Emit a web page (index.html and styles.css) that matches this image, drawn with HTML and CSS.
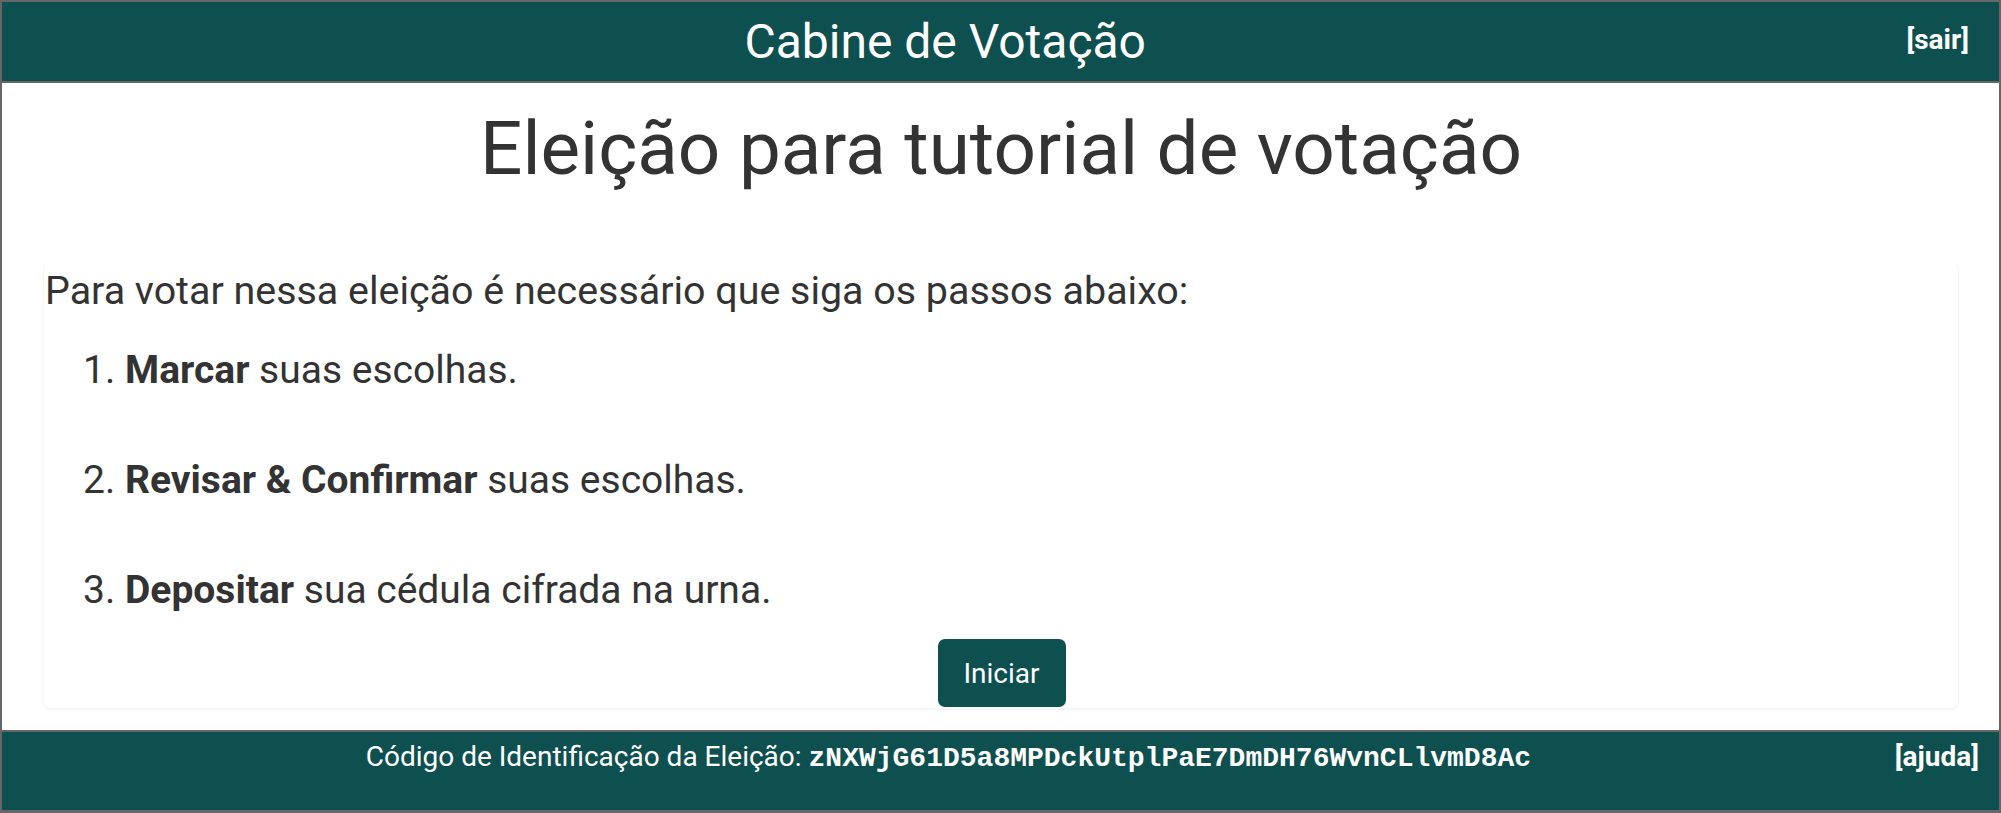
FILE: index.html
```html
<!DOCTYPE html>
<html lang="pt-BR">
<head>
<meta charset="utf-8">
<title>Cabine de Votação</title>
<link rel="stylesheet" href="styles.css">
</head>
<body>
<div class="frame">
  <header class="topbar">
    <div class="topbar-title">Cabine de Votação</div>
    <a class="topbar-link" href="#">[sair]</a>
  </header>
  <main class="content">
    <h1 class="election-title">Eleição para tutorial de votação</h1>
    <section class="card">
      <p class="intro">Para votar nessa eleição é necessário que siga os passos abaixo:</p>
      <ol class="steps">
        <li><strong>Marcar</strong> suas escolhas.</li>
        <li><strong>Revisar &amp; Confirmar</strong> suas escolhas.</li>
        <li><strong>Depositar</strong> sua cédula cifrada na urna.</li>
      </ol>
      <div class="actions">
        <button class="btn-start" type="button">Iniciar</button>
      </div>
    </section>
  </main>
  <footer class="bottombar">
    <div class="fingerprint">Código de Identificação da Eleição: <code class="hash">zNXWjG61D5a8MPDckUtplPaE7DmDH76WvnCLlvmD8Ac</code></div>
    <a class="bottombar-link" href="#">[ajuda]</a>
  </footer>
</div>
</body>
</html>
```

FILE: styles.css
```css
* { box-sizing: border-box; }
html, body { margin: 0; padding: 0; background: #fff; }
body {
  font-family: Roboto, "Liberation Sans", Arial, sans-serif;
  color: #333;
}
.frame {
  width: 2001px;
  height: 813px;
  border: 2px solid #666;
  border-bottom-width: 3px;
  display: flex;
  flex-direction: column;
}
.topbar {
  height: 81px;
  flex: none;
  background: #0e4f4f;
  border-bottom: 2px solid #666;
  display: flex;
  align-items: center;
  color: #fff;
}
.topbar-title {
  flex: 1;
  text-align: center;
  font-size: 48px;
  line-height: 1;
}
.topbar-link {
  color: #fff;
  font-weight: 700;
  font-size: 28px;
  text-decoration: none;
  padding: 0 30px 0 18px;
  margin-top: -4px;
}
.content {
  flex: 1;
  padding: 0 40px 0 41px;
  display: flex;
  flex-direction: column;
}
.election-title {
  margin: 21px 0 0;
  font-weight: 400;
  font-size: 74.6px;
  line-height: 89px;
  text-align: center;
  color: #333;
}
.card {
  margin-top: 69px;
  padding: 0 0 1px 1px;
  border-radius: 8px;
  box-shadow: 0 1px 2px rgba(0,0,0,0.05);
  border: 1px solid #f5f5f5;
  border-top-color: transparent;
}
.intro {
  margin: -1px 0 0;
  font-size: 39.4px;
  line-height: 58px;
}
.steps {
  margin: 0;
  padding-left: 80px;
  font-size: 39px;
}
.steps li {
  line-height: 58px;
  margin-top: 52px;
}
.steps li:first-child { margin-top: 21px; }
.steps strong { font-weight: 700; }
.actions {
  display: flex;
  justify-content: center;
  margin-top: 20px;
}
.btn-start {
  width: 128px;
  height: 68px;
  background: #0e4f4f;
  color: #fff;
  border: 0;
  border-radius: 7px;
  font-family: Roboto, "Liberation Sans", Arial, sans-serif;
  font-size: 28px;
}
.bottombar {
  height: 80px;
  flex: none;
  background: #0e4f4f;
  border-top: 2px solid #666;
  display: flex;
  align-items: flex-start;
  padding-top: 7px;
  color: #fff;
  font-size: 28px;
  line-height: 36px;
}
.fingerprint {
  flex: 1;
  text-align: center;
}
.hash {
  font-family: "Liberation Mono", "Courier New", monospace;
  font-weight: 700;
  font-size: 28px;
}
.bottombar-link {
  color: #fff;
  font-weight: 700;
  text-decoration: none;
  padding: 0 20px 0 0;
}
```
